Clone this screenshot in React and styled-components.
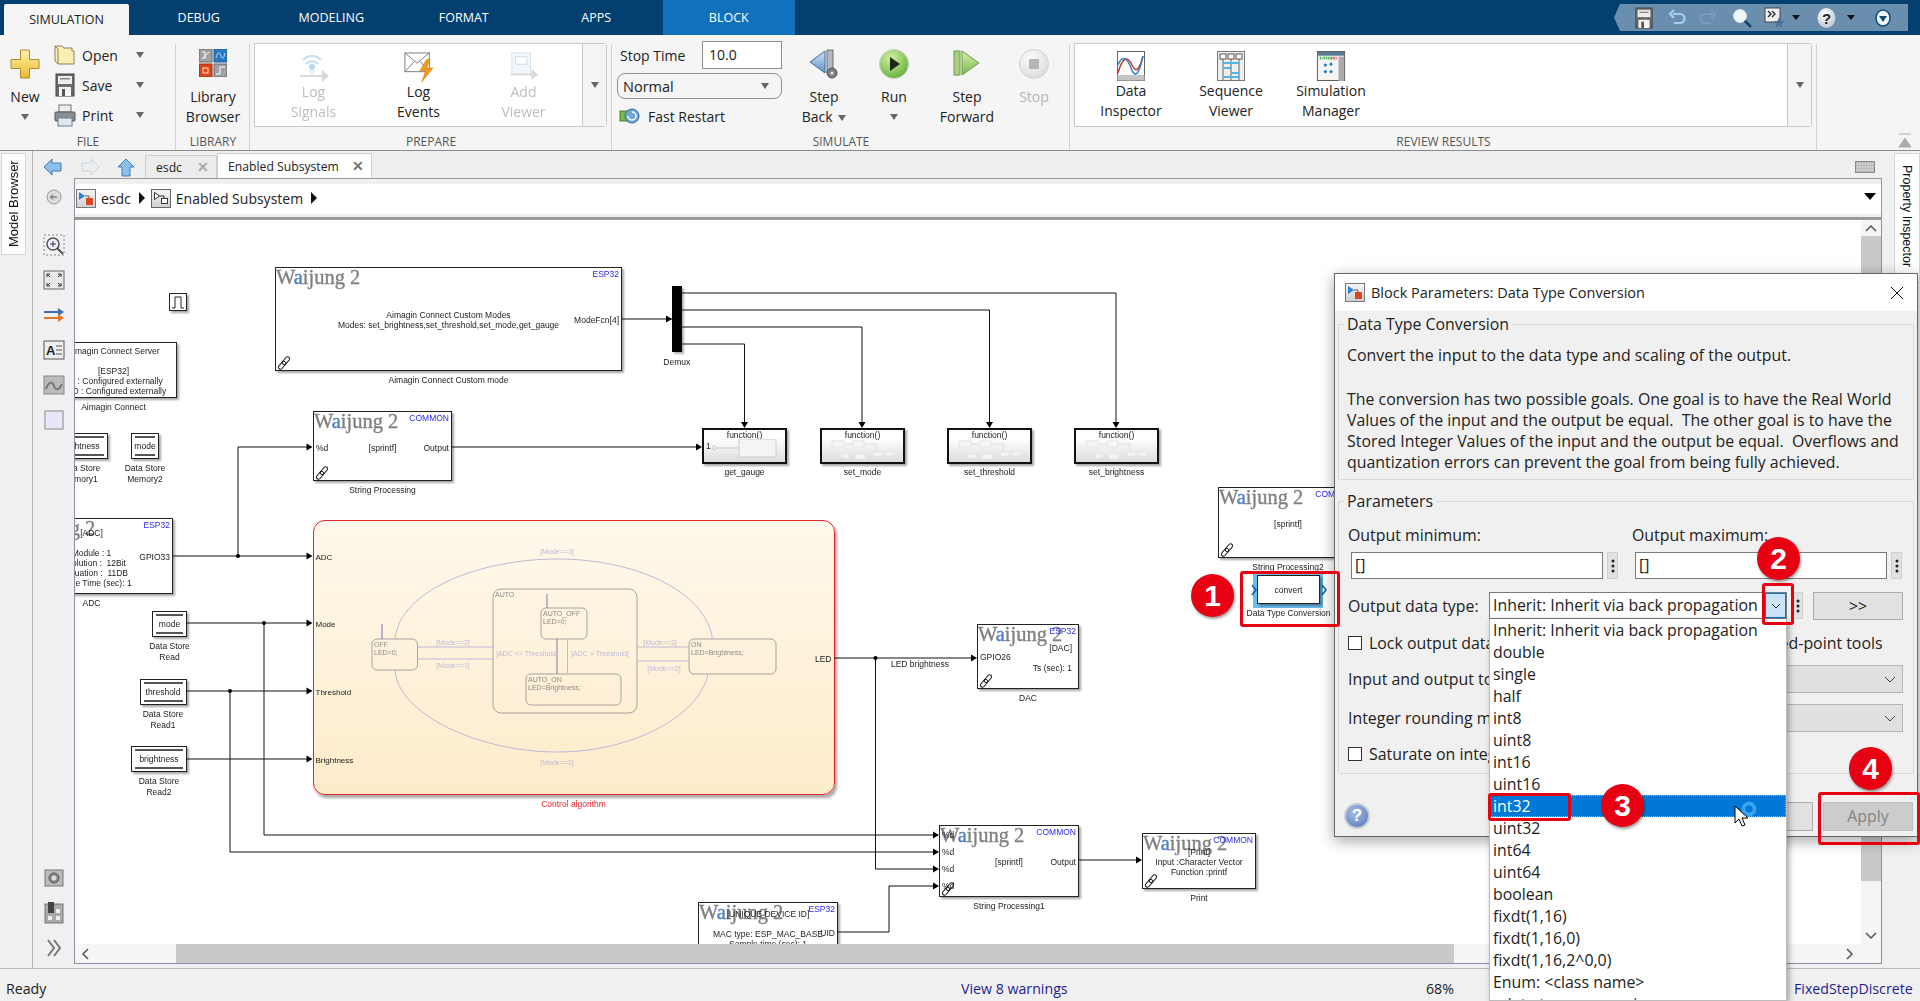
import React from "react";
import styled, { createGlobalStyle } from "styled-components";

const UI_FONT = `"Open Sans", "Noto Sans", sans-serif`;
const BLOCK_FONT = `"Liberation Sans", Arial, sans-serif`;

const TABS = ["SIMULATION", "DEBUG", "MODELING", "FORMAT", "APPS", "BLOCK"];
const DATA_TYPES = [
  "Inherit: Inherit via back propagation", "double", "single", "half", "int8", "uint8", "int16", "uint16", "int32",
  "uint32", "int64", "uint64", "boolean", "fixdt(1,16)", "fixdt(1,16,0)", "fixdt(1,16,2^0,0)", "Enum: <class name>",
  "<data type expression>",
];
const WIRES = [
  "M622 319H672", "M681 293H1116V423", "M681 310H989.5V423", "M681 327H862V423", "M681 344H744.5V423",
  "M452 447H697", "M173 556H307", "M238 556V447H307", "M186 623H307", "M264 623V835H934", "M186 691H307",
  "M230 691V852H934", "M186 759H307", "M834 658H972", "M875.5 658V869H934", "M838 932H889V886H934", "M1079 860H1137",
];
const RIGHT_ARROWS = [
  [672, 319], [702, 447], [312.5, 447], [312.5, 556], [312.5, 623], [312.5, 691], [312.5, 759], [977, 658],
  [939, 835], [939, 852], [939, 869], [939, 886], [1142, 860],
];
const DOWN_ARROWS = [744.5, 862, 989.5, 1116];
const JUNCTIONS = [[238, 556], [264, 623], [230, 691], [875.5, 658]];
const FUNCTIONS = [
  { x: 702, name: "get_gauge" }, { x: 820, name: "set_mode" },
  { x: 947, name: "set_threshold" }, { x: 1074, name: "set_brightness" },
];
const STATES = [
  { x: 372, y: 639, w: 45.5, h: 31, r: 5, lines: ["OFF", "LED=0;"] },
  { x: 493, y: 589, w: 144, h: 124, r: 8, lines: ["AUTO"] },
  { x: 541, y: 608, w: 46, h: 31, r: 5, lines: ["AUTO_OFF", "LED=0;"] },
  { x: 526, y: 674, w: 95, h: 31, r: 5, lines: ["AUTO_ON", "LED=Brightness;"] },
  { x: 689, y: 639, w: 87, h: 35, r: 5, lines: ["ON", "LED=Brightness;"] },
];
const GUARDS = [
  [557, 554, "[Mode==3]"], [453, 645, "[Mode==2]"], [453, 668, "[Mode==1]"], [527, 656, "[ADC <= Threshold]"],
  [600, 656, "[ADC > Threshold]"], [660, 645, "[Mode==3]"], [664, 671, "[Mode==2]"], [557, 765, "[Mode==1]"],
];

const Grad = ({ id, from, to, radial }) =>
  radial ? (
    <radialGradient id={id} cx="0.4" cy="0.3" r="0.8"><stop offset="0" stopColor={from} /><stop offset="1" stopColor={to} /></radialGradient>
  ) : (
    <linearGradient id={id} x1="0" y1="0" x2="0" y2="1"><stop offset="0" stopColor={from} /><stop offset="1" stopColor={to} /></linearGradient>
  );

const NewIcon = () => (
  <svg width="30" height="30" viewBox="0 0 30 30">
    <defs><Grad id="plus" from="#fff3a6" to="#eeb92e" /></defs>
    <path d="M10.5 1h9v9.500h9.500v9H19.500v9.500h-9V19.500H1v-9h9.500z" fill="url(#plus)" stroke="#a98a3a" />
  </svg>
);
const FolderIcon = () => (
  <svg width="22" height="24" viewBox="0 0 22 24">
    <path d="M1 3h7l2 2h8v3l2 0v13H4L1 18z" fill="#fbeeb4" stroke="#8d8258" />
    <path d="M1 3l3 3v15" fill="none" stroke="#8d8258" />
  </svg>
);
const SaveIcon = ({ size = 22 }) => (
  <svg width={size} height={size + 2} viewBox="0 0 22 24">
    <rect x="2" y="1" width="18" height="22" fill="#6b6b6b" stroke="#444" />
    <rect x="4" y="3" width="14" height="8" fill="#ececec" />
    <rect x="6" y="5" width="10" height="1.500" fill="#888" />
    <rect x="5" y="14" width="12" height="9" fill="#f4f4f4" />
    <rect x="8" y="16" width="3" height="7" fill="#555" />
  </svg>
);
const PrintIcon = () => (
  <svg width="22" height="24" viewBox="0 0 22 24">
    <rect x="5" y="2" width="12" height="7" fill="#eee" stroke="#777" />
    <rect x="1" y="9" width="20" height="9" rx="1" fill="#8b8f94" stroke="#555" />
    <rect x="4" y="15" width="14" height="8" fill="#dfe8f2" stroke="#6b7c90" />
  </svg>
);
const LibraryIcon = () => (
  <svg width="28" height="28" viewBox="0 0 28 28">
    <rect x="0" y="0" width="13" height="13" fill="#9fa3a8" stroke="#666" />
    <path d="M3 10l7-7M3 3h3v7" stroke="#fff" fill="none" />
    <rect x="15" y="0" width="13" height="13" fill="#2a79c2" stroke="#1b5a94" />
    <path d="M17 9c2-8 4-5 5-2s3 3 4-3" stroke="#bfe0ff" fill="none" />
    <rect x="0" y="15" width="13" height="13" fill="#d9481c" stroke="#9c2f10" />
    <rect x="4" y="19" width="5" height="5" fill="none" stroke="#ffe2d0" />
    <rect x="15" y="15" width="13" height="13" fill="#9fa3a8" stroke="#666" />
    <path d="M17 25h4v-7h5" stroke="#fff" fill="none" />
  </svg>
);
const LogSignalsIcon = () => (
  <svg width="32" height="30" viewBox="0 0 32 30">
    <path d="M5 8a12 12 0 0 1 18 0M8 12a8 8 0 0 1 12 0" fill="none" stroke="#8ec3ea" strokeWidth="2" />
    <circle cx="14" cy="15" r="3" fill="#7fb6e2" />
    <rect x="11" y="18" width="6" height="4" fill="#cfe3f3" />
    <path d="M2 24h24" stroke="#bbb" strokeWidth="2" />
    <path d="M24 18l7 6-7 6z" fill="#bbb" />
  </svg>
);
const LogEventsIcon = () => (
  <svg width="32" height="32" viewBox="0 0 32 32">
    <rect x="1" y="1" width="26" height="20" fill="#fff" stroke="#777" />
    <path d="M1 1l13 11L27 1M1 21l10-11M27 21L17 10" fill="none" stroke="#777" />
    <path d="M24 8l-7 12h6l-4 12 12-15h-7l4-9z" fill="#ef9a1b" stroke="#c46f0c" strokeWidth=".5" />
  </svg>
);
const AddViewerIcon = () => (
  <svg width="32" height="32" viewBox="0 0 32 32">
    <rect x="3" y="1" width="20" height="23" fill="#e8f1f9" stroke="#b8c8d6" />
    <rect x="7" y="5" width="12" height="8" fill="#fff" stroke="#9fc0de" />
    <path d="M2 24h24" stroke="#bbb" strokeWidth="2" />
    <path d="M24 18l7 6-7 6z" fill="#bbb" />
  </svg>
);
const StepBackIcon = () => (
  <svg width="30" height="30" viewBox="0 0 30 30">
    <defs><Grad id="sb" from="#cfe2f5" to="#5c93cc" /></defs>
    <path d="M16 2v22L1 13z" fill="url(#sb)" stroke="#3d6a9c" />
    <rect x="18" y="1" width="6" height="22" fill="#b5b9bd" stroke="#6d7176" />
    <circle cx="23" cy="24" r="5" fill="#7c8086" stroke="#4f5257" />
    <circle cx="23" cy="24" r="1.500" fill="#eee" />
  </svg>
);
const RunIcon = () => (
  <svg width="30" height="30" viewBox="0 0 30 30">
    <defs><Grad id="run" from="#d6f0a6" to="#58ad2e" radial /></defs>
    <circle cx="15" cy="15" r="14.500" fill="url(#run)" stroke="#c9cfc2" />
    <path d="M11 8l10 7-10 7z" fill="#1c2a14" />
  </svg>
);
const StepForwardIcon = () => (
  <svg width="30" height="30" viewBox="0 0 30 30">
    <defs><Grad id="sf" from="#d8efb2" to="#79b84a" /></defs>
    <rect x="2" y="2" width="6" height="24" fill="#a8cf82" stroke="#6f9c4a" />
    <path d="M10 2v24l17-12z" fill="url(#sf)" stroke="#6f9c4a" />
  </svg>
);
const StopIcon = () => (
  <svg width="30" height="30" viewBox="0 0 30 30">
    <defs><Grad id="stop" from="#fbfbfb" to="#d9d9d9" radial /></defs>
    <circle cx="15" cy="15" r="14.500" fill="url(#stop)" stroke="#d2d2d2" />
    <rect x="10" y="10" width="10" height="10" fill="#b5b5b5" />
  </svg>
);
const FastRestartIcon = () => (
  <svg width="22" height="20" viewBox="0 0 22 20">
    <rect x="1" y="5" width="10" height="10" fill="#79b84a" stroke="#4d7f2b" />
    <circle cx="13" cy="10" r="7" fill="#6fa9dc" stroke="#37689a" />
    <path d="M13 6a4 4 0 1 1-4 4" fill="none" stroke="#fff" strokeWidth="1.500" />
  </svg>
);
const DataInspectorIcon = () => (
  <svg width="30" height="30" viewBox="0 0 30 30">
    <rect x="1.500" y="0.500" width="27" height="29" fill="#fff" stroke="#666" />
    <rect x="1.500" y="24" width="27" height="5.500" fill="#c4c4c4" />
    <path d="M2 22C7 4 12 6 16 14s7 6 11-9" fill="none" stroke="#c0392b" strokeWidth="1.500" />
    <path d="M2 14C6 4 11 6 15 17s8 7 12-12" fill="none" stroke="#3a7fc5" strokeWidth="1.500" />
  </svg>
);
const SequenceIcon = () => (
  <svg width="30" height="30" viewBox="0 0 30 30">
    <rect x="1.500" y="0.500" width="27" height="29" fill="#eee" stroke="#777" />
    <rect x="4" y="3" width="6" height="5" fill="#fff" stroke="#555" />
    <rect x="12" y="3" width="6" height="5" fill="#fff" stroke="#555" />
    <rect x="20" y="3" width="6" height="5" fill="#fff" stroke="#555" />
    <path d="M7 8v21M15 8v21M23 8v21" stroke="#666" />
    <path d="M7 12h16M7 17h8M15 22h8M7 26h16" stroke="#55b3ec" strokeWidth="2" />
  </svg>
);
const SimManagerIcon = () => (
  <svg width="30" height="32" viewBox="0 0 30 32">
    <rect x="0.500" y="0.500" width="29" height="31" fill="#f4f4f4" stroke="#555" />
    <rect x="1" y="1" width="28" height="4" fill="#5b7a96" />
    <path d="M3 7.500h3" stroke="#3cb043" strokeWidth="3" strokeDasharray="1.500 1" />
    <path d="M7 7.500h8" stroke="#3cb043" strokeWidth="3" strokeDasharray="1.500 1" />
    <path d="M15 7.500h6" stroke="#e0463c" strokeWidth="3" strokeDasharray="1.500 1" />
    <rect x="23" y="6" width="6" height="26" fill="#aaa" />
    <path d="M9 13l2 2-2 2-2-2zM15 12l2 2-2 2-2-2zM9 20l2 2-2 2-2-2zM15 20l2 2-2 2-2-2z" fill="#1a78c2" />
  </svg>
);

const UndoIcon = ({ color }) => (
  <svg width="18" height="20" viewBox="0 0 18 20">
    <path d="M5 6h7a4.500 4.500 0 0 1 0 9H6M6 2L2 6l4 4" fill="none" stroke={color} strokeWidth="2.200" />
  </svg>
);
const RedoIcon = ({ color }) => (
  <svg width="18" height="20" viewBox="0 0 18 20">
    <path d="M13 6H6a4.500 4.500 0 0 0 0 9h6M12 2l4 4-4 4" fill="none" stroke={color} strokeWidth="2.200" />
  </svg>
);
const SearchIcon = () => (
  <svg width="20" height="20" viewBox="0 0 20 20">
    <path d="M12 12l7 7" stroke="#123f6a" strokeWidth="2.500" />
    <circle cx="8" cy="8" r="6.500" fill="#eef5fb" stroke="#d8e6f2" />
  </svg>
);
const BookmarkIcon = () => (
  <svg width="20" height="22" viewBox="0 0 20 22">
    <rect x="1" y="1" width="15" height="14" fill="#efefef" stroke="#444" />
    <path d="M4 4l3 3-3 3M8 4l3 3-3 3" fill="none" stroke="#222" strokeWidth="1.300" />
    <path d="M15 10l1.500 4 4 .2-3 2.600 1 4-3.500-2.200-3.500 2.200 1-4-3-2.600 4-.2z" fill="#4c7396" />
  </svg>
);
const HelpGlobe = () => (
  <svg width="19" height="22" viewBox="0 0 19 22">
    <defs><Grad id="hg" from="#ffffff" to="#b9c1c9" radial /></defs>
    <ellipse cx="9.500" cy="11" rx="9" ry="10" fill="url(#hg)" />
    <text x="9.500" y="16.500" fontFamily={BLOCK_FONT} fontSize="15" fontWeight="700" fill="#1e2a36" textAnchor="middle">?</text>
  </svg>
);
const MinimizeDot = () => (
  <svg width="16" height="18" viewBox="0 0 16 18">
    <ellipse cx="8" cy="9" rx="7" ry="8" fill="#f2f6fa" stroke="#0b4a7c" strokeWidth="1.500" />
    <path d="M4 7h8l-4 6z" fill="#0b4a7c" />
  </svg>
);
const ModelIcon = () => (
  <svg width="20" height="19" viewBox="0 0 20 19">
    <defs><Grad id="mi" from="#f6f6f6" to="#cfcfcf" /></defs>
    <rect x=".5" y=".5" width="19" height="18" fill="url(#mi)" stroke="#777" />
    <path d="M3 3l6 4-6 4z" fill="#2b86d2" />
    <rect x="10" y="9" width="7" height="7" fill="#d9481c" />
    <path d="M9 7h4v2" fill="none" stroke="#666" />
  </svg>
);
const SubsystemIcon = () => (
  <svg width="20" height="19" viewBox="0 0 20 19">
    <defs><Grad id="si" from="#f6f6f6" to="#cfcfcf" /></defs>
    <rect x=".5" y=".5" width="19" height="18" fill="url(#si)" stroke="#666" />
    <path d="M3.500 3.500l5 3.500-5 3.500z" fill="#fff" stroke="#333" />
    <rect x="10.500" y="9.500" width="6" height="5" fill="#fff" stroke="#333" />
    <path d="M8.500 7h4.500v2.500" fill="none" stroke="#333" />
  </svg>
);

const Arrow = ({ d, fill, stroke, size = 20 }) => (
  <svg width={size} height={size} viewBox="0 0 20 20"><path d={d} fill={fill} stroke={stroke} /></svg>
);
const ToolIcon = ({ children }) => <svg width="24" height="24" viewBox="0 0 24 24">{children}</svg>;
const ThreeDots = () => (
  <svg width="4" height="14" viewBox="0 0 4 14"><circle cx="2" cy="2" r="1.500" fill="#222" /><circle cx="2" cy="7" r="1.500" fill="#222" /><circle cx="2" cy="12" r="1.500" fill="#222" /></svg>
);

const WaijungLogo = () => <Logo>W<LogoA>a</LogoA>ijung 2</Logo>;
const LinkMark = () => (
  <LinkSvg width="14" height="14" viewBox="0 0 14 14">
    <g transform="rotate(-50 7 7)" fill="#fff" stroke="#222" strokeWidth="1">
      <rect x="-.5" y="5" width="9" height="4" rx="2" />
      <rect x="5.500" y="5" width="9" height="4" rx="2" fill="none" />
    </g>
  </LinkSvg>
);

const FunctionThumb = ({ first }) =>
  first ? (
    <ThumbSvg width="72" height="22" viewBox="0 0 72 22">
      <circle cx="6.500" cy="9" r="2" fill="none" stroke="#ccc" />
      <path d="M8.500 9H31" stroke="#ccc" />
      <rect x="31" y="0" width="37" height="18" fill="#f4f4f4" stroke="#ccc" />
    </ThumbSvg>
  ) : (
    <ThumbSvg width="72" height="22" viewBox="0 0 72 22">
      <g fill="#f5f5f5" stroke="#e6e6e6">
        <rect x="6" y="2" width="12" height="6" />
        <rect x="27" y="2" width="11" height="6" />
        <rect x="15" y="15" width="8" height="4" />
        <rect x="29" y="15" width="10" height="5" />
        <rect x="47" y="13" width="9" height="4" />
        <rect x="59" y="13" width="8" height="4" />
      </g>
      <path d="M18 5h9M38 5h12M50 5v8" stroke="#ddd" fill="none" />
    </ThumbSvg>
  );

const DataStore = ({ x, y, w, text, lines }) => (
  <StoreBlock $x={x} $y={y} $w={w} $h={26}>
    {text}
    <BlockLabel>{lines.map((l) => <div key={l}>{l}</div>)}</BlockLabel>
  </StoreBlock>
);

const Diagram = () => (
  <>
    <Block $x={275} $y={267} $w={347} $h={104}>
      <WaijungLogo /><Tag>ESP32</Tag>
      <BlockText $top={42}><div>Aimagin Connect Custom Modes</div><div>Modes: set_brightness,set_threshold,set_mode,get_gauge</div></BlockText>
      <PortOut $top={47}>ModeFcn[4]</PortOut>
      <LinkMark />
      <BlockLabel>Aimagin Connect Custom mode</BlockLabel>
    </Block>

    <PulseBlock $x={169} $y={293} $w={18} $h={18}>
      <svg width="14" height="14" viewBox="0 0 14 14"><path d="M1 13h3V2h6v11h3" fill="none" stroke="#222" /></svg>
    </PulseBlock>

    <Block $x={50} $y={342} $w={127} $h={56}>
      <BlockText $top={3}>
        <div>Aimagin Connect Server</div><div>&nbsp;</div><div>[ESP32]</div>
        <div>TX : Configured externally</div><div>RXD : Configured externally</div>
      </BlockText>
      <BlockLabel>Aimagin Connect</BlockLabel>
    </Block>

    <DataStore x={52} y={433} w={56} text="brightness" lines={["Data Store", "Memory1"]} />
    <DataStore x={131} y={433} w={28} text="mode" lines={["Data Store", "Memory2"]} />

    <Block $x={313} $y={411} $w={139} $h={70}>
      <WaijungLogo /><Tag>COMMON</Tag>
      <PortIn $top={31}>%d</PortIn>
      <BlockText $top={31}><div>[sprintf]</div></BlockText>
      <PortOut $top={31}>Output</PortOut>
      <LinkMark />
      <BlockLabel>String Processing</BlockLabel>
    </Block>

    <Block $x={10} $y={518} $w={163} $h={76}>
      <WaijungLogo /><Tag>ESP32</Tag>
      <BlockText $top={9}>
        <div>[ADC]</div><div>&nbsp;</div><div>Module : 1</div><div>Resolution :  12Bit</div>
        <div>Attenuation :  11DB</div><div>Sample Time (sec): 1</div>
      </BlockText>
      <PortOut $top={33}>GPIO33</PortOut>
      <BlockLabel>ADC</BlockLabel>
    </Block>

    <DataStore x={152} y={611} w={35} text="mode" lines={["Data Store", "Read"]} />
    <DataStore x={139.5} y={679} w={47} text="threshold" lines={["Data Store", "Read1"]} />
    <DataStore x={131} y={746} w={56} text="brightness" lines={["Data Store", "Read2"]} />

    <Demux $x={672} $y={286} $w={9.5} $h={66}><BlockLabel>Demux</BlockLabel></Demux>

    {FUNCTIONS.map((f, i) => (
      <FunctionBlock key={f.name} $x={f.x} $y={428} $w={85} $h={36}>
        <FunctionTitle>function()</FunctionTitle>
        {i === 0 && <PortIn $top={11}>1</PortIn>}
        <FunctionThumb first={i === 0} />
        <BlockLabel>{f.name}</BlockLabel>
      </FunctionBlock>
    ))}

    <Chart $x={312.5} $y={520} $w={522} $h={275}>
      <ChartPort $top={32}>ADC</ChartPort>
      <ChartPort $top={99}>Mode</ChartPort>
      <ChartPort $top={167}>Threshold</ChartPort>
      <ChartPort $top={235}>Brightness</ChartPort>
      <PortOut $top={133}>LED</PortOut>
      <ChartLabel>Control algorithm</ChartLabel>
    </Chart>

    <Block $x={1218} $y={487} $w={140} $h={71}>
      <WaijungLogo /><Tag>COMMON</Tag>
      <BlockText $top={31}><div>[sprintf]</div></BlockText>
      <LinkMark />
      <BlockLabel>String Processing2</BlockLabel>
    </Block>

    <Selection $x={1253} $y={572} $w={70} $h={36}>
      <Chevron $left={-2} width="6" height="12" viewBox="0 0 6 12"><path d="M1 1l4 5-4 5" fill="none" stroke="#0a5fa8" strokeWidth="1.500" /></Chevron>
      <Chevron $left={68} width="6" height="12" viewBox="0 0 6 12"><path d="M1 1l4 5-4 5" fill="none" stroke="#0a5fa8" strokeWidth="1.500" /></Chevron>
    </Selection>
    <Block $x={1257} $y={575} $w={63} $h={29}>
      <BlockText $top={9}><div>convert</div></BlockText>
      <BlockLabel>Data Type Conversion</BlockLabel>
    </Block>

    <Block $x={977} $y={624} $w={102} $h={65}>
      <WaijungLogo /><Tag>ESP32</Tag>
      <PortOut $top={18} $inset={6}>[DAC]</PortOut>
      <PortIn $top={27}>GPIO26</PortIn>
      <PortOut $top={38} $inset={6}>Ts (sec): 1</PortOut>
      <LinkMark />
      <BlockLabel>DAC</BlockLabel>
    </Block>

    <Block $x={939} $y={825} $w={140} $h={72}>
      <WaijungLogo /><Tag>COMMON</Tag>
      <PortIn $top={4}>%d</PortIn>
      <PortIn $top={21}>%d</PortIn>
      <PortIn $top={38}>%d</PortIn>
      <PortIn $top={55}>%d</PortIn>
      <BlockText $top={31}><div>[sprintf]</div></BlockText>
      <PortOut $top={31}>Output</PortOut>
      <LinkMark />
      <BlockLabel>String Processing1</BlockLabel>
    </Block>

    <Block $x={1142} $y={833} $w={114} $h={56}>
      <WaijungLogo /><Tag>COMMON</Tag>
      <BlockText $top={13}><div>[Print]</div><div>Input :Character Vector</div><div>Function :printf</div></BlockText>
      <LinkMark />
      <BlockLabel>Print</BlockLabel>
    </Block>

    <Block $x={698} $y={902} $w={140} $h={70}>
      <WaijungLogo /><Tag>ESP32</Tag>
      <BlockText $top={6}><div>[UNIQUE DEVICE ID]</div><div>&nbsp;</div><div>MAC type: ESP_MAC_BASE</div><div>Sample time (sec): 1</div></BlockText>
      <PortOut $top={25}>UID</PortOut>
    </Block>

    <WireLayer width="1787" height="724" viewBox="75 220 1787 724">
      <g fill="none" stroke="#111" strokeWidth="1">
        {WIRES.map((d) => <path key={d} d={d} />)}
      </g>
      <g fill="#000">
        {RIGHT_ARROWS.map(([x, y]) => <path key={`${x}-${y}`} d={`M${x} ${y}l-6-3.500v7z`} />)}
        {DOWN_ARROWS.map((x) => <path key={x} d={`M${x} 428l-3.500-6h7z`} />)}
        {JUNCTIONS.map(([x, y]) => <circle key={x} cx={x} cy={y} r="2" />)}
      </g>
      <text x="920" y="667" fontFamily={BLOCK_FONT} fontSize="8.500" textAnchor="middle" fill="#222">LED brightness</text>
      <g fill="none" stroke="#a9a2a0">
        {STATES.map((s) => <rect key={s.lines[0]} x={s.x} y={s.y} width={s.w} height={s.h} rx={s.r} />)}
      </g>
      <g fontFamily={BLOCK_FONT} fontSize="7" fill="#8f8a86">
        {STATES.map((s) => s.lines.map((l, i) => <text key={l + s.x} x={s.x + 2} y={s.y + 8 + i * 8}>{l}</text>))}
      </g>
      <g fill="none" stroke="#bdb9d8">
        <path d="M395 639C400 590 480 559 557 559S705 590 712.500 639" />
        <path d="M395 670C398 715 480 752 557 752S700 715 708 674" />
        <path d="M417.500 647H493M417.500 659H493M637 647H689M637 661H689M567.500 639V674" />
        <path d="M382 624V639M547 594V608M557 639V674" stroke="#7c78b4" />
      </g>
      <g fontFamily={BLOCK_FONT} fontSize="7" fill="#bdb9d8" textAnchor="middle">
        {GUARDS.map(([x, y, t]) => <text key={`${t}${x}${y}`} x={x} y={y}>{t}</text>)}
      </g>
    </WireLayer>
  </>
);

const Dialog = () => (
  <DialogWindow>
    <DialogTitleBar>
      <ModelIcon />
      <DialogTitle>Block Parameters: Data Type Conversion</DialogTitle>
      <CloseX width="16" height="16" viewBox="0 0 16 16"><path d="M2 2l12 12M14 2L2 14" stroke="#111" /></CloseX>
    </DialogTitleBar>
    <DialogBody>
      <Group>
        <GroupLegend>Data Type Conversion</GroupLegend>
        <Para $gap={23}>Convert the input to the data type and scaling of the output.</Para>
        <Para>The conversion has two possible goals. One goal is to have the Real World</Para>
        <Para>Values of the input and the output be equal.&nbsp; The other goal is to have the</Para>
        <Para>Stored Integer Values of the input and the output be equal.&nbsp; Overflows and</Para>
        <Para>quantization errors can prevent the goal from being fully achieved.</Para>
      </Group>
      <ParamGroup>
        <GroupLegend>Parameters</GroupLegend>
        <MinMaxGrid>
          <FieldLabel>Output minimum:</FieldLabel>
          <FieldLabel>Output maximum:</FieldLabel>
          <FieldWrap><TextField>[]</TextField><DotsButton><ThreeDots /></DotsButton></FieldWrap>
          <FieldWrap><TextField>[]</TextField><DotsButton><ThreeDots /></DotsButton></FieldWrap>
        </MinMaxGrid>
        <TypeRow>
          <TypeLabel>Output data type:</TypeLabel>
          <TypeSelect>
            <TypeValue>Inherit: Inherit via back propagation</TypeValue>
            <TypeCaret>
              <svg width="10" height="6" viewBox="0 0 10 6"><path d="M1 1l4 4 4-4" fill="none" stroke="#333" /></svg>
            </TypeCaret>
          </TypeSelect>
          <DotsButton><ThreeDots /></DotsButton>
          <ExpandButton>&gt;&gt;</ExpandButton>
        </TypeRow>
        <CheckRow $mt={13}><CheckBox />Lock output data type setting against changes by the fixed-point tools</CheckRow>
        <SelectRow $mt={11}>
          Input and output to have equal:
          <DisabledSelect><svg width="12" height="7" viewBox="0 0 12 7"><path d="M1 1l5 5 5-5" fill="none" stroke="#444" /></svg></DisabledSelect>
        </SelectRow>
        <SelectRow $mt={11}>
          Integer rounding mode:
          <DisabledSelect><svg width="12" height="7" viewBox="0 0 12 7"><path d="M1 1l5 5 5-5" fill="none" stroke="#444" /></svg></DisabledSelect>
        </SelectRow>
        <CheckRow $mt={11}><CheckBox />Saturate on integer overflow</CheckRow>
      </ParamGroup>
      <DialogFooter>
        <HelpBadge>?</HelpBadge>
        <FooterButtons>
          <PlainButton>OK</PlainButton>
          <PlainButton>Cancel</PlainButton>
          <PlainButton>Help</PlainButton>
          <ApplyButton>Apply</ApplyButton>
        </FooterButtons>
      </DialogFooter>
    </DialogBody>
  </DialogWindow>
);

const App = () => (
  <Page>
    <GlobalStyle />
    <TabBar>
      {TABS.map((t, i) => <Tab key={t} $active={i === 0} $context={t === "BLOCK"}>{t}</Tab>)}
      <QuickAccess>
        <QuickSlot $ml={0}><SaveIcon size={20} /></QuickSlot>
        <QuickSlot $ml={14}><UndoIcon color="#a6cfef" /></QuickSlot>
        <QuickSlot $ml={13}><RedoIcon color="#7b9cb8" /></QuickSlot>
        <QuickSlot $ml={15}><SearchIcon /></QuickSlot>
        <QuickSlot $ml={12}><BookmarkIcon /></QuickSlot>
        <QuickSlot $ml={8}><SmallCaret /></QuickSlot>
        <QuickSlot $ml={17}><HelpGlobe /></QuickSlot>
        <QuickSlot $ml={11}><SmallCaret /></QuickSlot>
        <QuickSlot $ml={20}><MinimizeDot /></QuickSlot>
      </QuickAccess>
    </TabBar>

    <Ribbon>
      <Section $w={176} label="FILE">
        <FileBody>
          <BigButton $w={50}><IconSlot><NewIcon /></IconSlot><ButtonText>New</ButtonText><BelowCaret /></BigButton>
          <FileList>
            <FileRow><FolderIcon /><span>Open</span><Caret /></FileRow>
            <FileRow><SaveIcon /><span>Save</span><Caret /></FileRow>
            <FileRow><PrintIcon /><span>Print</span><Caret /></FileRow>
          </FileList>
        </FileBody>
      </Section>
      <Section $w={74} label="LIBRARY">
        <BigButton $w={74}><IconSlot><LibraryIcon /></IconSlot><ButtonText>Library</ButtonText><ButtonText>Browser</ButtonText></BigButton>
      </Section>
      <Section $w={362} label="PREPARE">
        <Gallery $w={353}>
          <GalleryItems $step={105}>
            <GalleryItem $off><LogSignalsIcon /><ButtonText>Log</ButtonText><ButtonText>Signals</ButtonText></GalleryItem>
            <GalleryItem><LogEventsIcon /><ButtonText>Log</ButtonText><ButtonText>Events</ButtonText></GalleryItem>
            <GalleryItem $off><AddViewerIcon /><ButtonText>Add</ButtonText><ButtonText>Viewer</ButtonText></GalleryItem>
          </GalleryItems>
          <GalleryStrip><Caret /></GalleryStrip>
        </Gallery>
      </Section>
      <Section $w={458} label="SIMULATE">
        <SimulateBody>
          <SimulateForm>
            <StopRow>Stop Time<StopInput>10.0</StopInput></StopRow>
            <ModeSelect>Normal<Caret /></ModeSelect>
            <RestartRow><FastRestartIcon />Fast Restart</RestartRow>
          </SimulateForm>
          <BigButton $w={72}><IconSlot><StepBackIcon /></IconSlot><ButtonText>Step</ButtonText><ButtonText>Back <InlineCaret /></ButtonText></BigButton>
          <BigButton $w={68}><IconSlot><RunIcon /></IconSlot><ButtonText>Run</ButtonText><BelowCaret /></BigButton>
          <BigButton $w={78}><IconSlot><StepForwardIcon /></IconSlot><ButtonText>Step</ButtonText><ButtonText>Forward</ButtonText></BigButton>
          <BigButton $w={56}><IconSlot><StopIcon /></IconSlot><ButtonText $off>Stop</ButtonText></BigButton>
        </SimulateBody>
      </Section>
      <Section $w={747} label="REVIEW RESULTS">
        <Gallery $w={738}>
          <GalleryItems $step={100}>
            <GalleryItem $dy={-1}><DataInspectorIcon /><ButtonText>Data</ButtonText><ButtonText>Inspector</ButtonText></GalleryItem>
            <GalleryItem $dy={-1}><SequenceIcon /><ButtonText>Sequence</ButtonText><ButtonText>Viewer</ButtonText></GalleryItem>
            <GalleryItem $dy={-1}><SimManagerIcon /><ButtonText>Simulation</ButtonText><ButtonText>Manager</ButtonText></GalleryItem>
          </GalleryItems>
          <GalleryStrip><Caret /></GalleryStrip>
        </Gallery>
      </Section>
      <RibbonEnd>
        <svg width="14" height="15" viewBox="0 0 14 15"><path d="M1 1h12M7 5l6 9H1z" stroke="#a9adb2" fill="#a9adb2" /></svg>
      </RibbonEnd>
    </Ribbon>

    <Workspace>
      <SideRail>
        <ModelBrowserTab>Model Browser</ModelBrowserTab>
      </SideRail>
      <Center>
        <NavRow>
          <Arrow d="M9 2L1 10l8 8v-4h9V6H9z" fill="#8cc0ea" stroke="#3f7db5" />
          <NavGap><Arrow d="M11 2l8 8-8 8v-4H2V6h9z" fill="#eceff2" stroke="#cdd2d6" /></NavGap>
          <NavGap $w={16}><Arrow d="M2 10l8-8 8 8h-4v9H6v-9z" fill="#8cc0ea" stroke="#3f7db5" /></NavGap>
          <DocTab>esdc<TabClose>✕</TabClose></DocTab>
          <DocTab $active>Enabled Subsystem<TabClose $active>✕</TabClose></DocTab>
          <KeyboardIcon width="20" height="12" viewBox="0 0 20 12">
            <rect x=".5" y=".5" width="19" height="11" fill="#bbb" stroke="#8a8a8a" />
            <path d="M2 3h16M2 6h16M2 9h16" stroke="#eee" strokeDasharray="1.500 1" />
          </KeyboardIcon>
        </NavRow>
        <ContentRow>
          <ToolColumn>
            <ToolTop>
              <ToolIcon><circle cx="12" cy="12" r="7" fill="#ddd" stroke="#999" /><path d="M15 12H9M11 9.500l-2.500 2.500 2.500 2.500" fill="none" stroke="#555" /></ToolIcon>
              <ToolIcon><rect x="2" y="2" width="20" height="20" fill="none" stroke="#888" strokeDasharray="2 2" /><circle cx="11" cy="11" r="6" fill="#eef" stroke="#555" strokeWidth="1.500" /><path d="M15 15l6 6" stroke="#555" strokeWidth="2" /><path d="M8 11h6M11 8v6" stroke="#333" /></ToolIcon>
              <ToolIcon><rect x="2" y="3" width="20" height="18" fill="#e8e8e8" stroke="#666" /><path d="M5 6l3 3M5 6h3M5 6v3M19 6l-3 3M19 6h-3M19 6v3M5 18l3-3M5 18h3M5 18v-3M19 18l-3-3M19 18h-3M19 18v-3" stroke="#333" fill="none" /></ToolIcon>
              <ToolIcon><path d="M2 9h16M2 15h16" stroke="#3f6fa8" strokeWidth="2" /><path d="M2 15h16" stroke="#e2762b" strokeWidth="2" /><path d="M16 5l6 4-6 4z" fill="#3f6fa8" /><path d="M16 11l6 4-6 4z" fill="#e2762b" /></ToolIcon>
              <ToolIcon><rect x="2" y="3" width="20" height="18" fill="#eee" stroke="#555" /><text x="4" y="17" fontFamily={BLOCK_FONT} fontSize="13" fontWeight="700" fill="#222">A</text><path d="M14 8h6M14 12h6M14 16h6" stroke="#555" /></ToolIcon>
              <ToolIcon><rect x="2" y="3" width="20" height="18" fill="#bbb" stroke="#888" /><path d="M4 16c3-8 6-8 8-3s5 4 8-2" fill="none" stroke="#777" strokeWidth="2" /></ToolIcon>
              <ToolIcon><rect x="3" y="3" width="18" height="18" fill="#e6e6f8" stroke="#aaa" strokeWidth="1.500" /></ToolIcon>
            </ToolTop>
            <ToolBottom>
              <ToolIcon><rect x="3" y="5" width="18" height="16" fill="#bbb" stroke="#777" /><circle cx="12" cy="13" r="5" fill="#888" stroke="#555" /><circle cx="12" cy="13" r="2.500" fill="#ddd" /></ToolIcon>
              <ToolIcon><rect x="3" y="3" width="18" height="19" fill="#aaa" stroke="#777" /><rect x="6" y="1" width="6" height="11" fill="#444" /><path d="M6 15h4v4H6zM14 15h4v4h-4zM14 8h4v4h-4z" fill="#eee" /></ToolIcon>
              <ToolIcon><path d="M6 4l6 8-6 8M12 4l6 8-6 8" fill="none" stroke="#777" strokeWidth="2" /></ToolIcon>
            </ToolBottom>
          </ToolColumn>
          <MainColumn>
            <AddressBar>
              <Crumb><ModelIcon />esdc<CrumbArrow /></Crumb>
              <Crumb><SubsystemIcon />Enabled Subsystem<CrumbArrow /></Crumb>
              <AddressCaret />
            </AddressBar>
            <CanvasFrame>
              <CanvasRow>
                <DiagramArea><Diagram /></DiagramArea>
                <VScroll>
                  <ScrollGlyph width="12" height="8" viewBox="0 0 12 8"><path d="M1 7l5-5 5 5" fill="none" stroke="#555" strokeWidth="1.500" /></ScrollGlyph>
                  <VThumb />
                  <ScrollGlyph width="12" height="8" viewBox="0 0 12 8"><path d="M1 1l5 5 5-5" fill="none" stroke="#555" strokeWidth="1.500" /></ScrollGlyph>
                </VScroll>
              </CanvasRow>
              <HScroll>
                <ScrollGlyph width="8" height="12" viewBox="0 0 8 12"><path d="M7 1L2 6l5 5" fill="none" stroke="#555" strokeWidth="1.500" /></ScrollGlyph>
                <HThumb />
                <ScrollGlyph width="8" height="12" viewBox="0 0 8 12"><path d="M1 1l5 5-5 5" fill="none" stroke="#555" strokeWidth="1.500" /></ScrollGlyph>
              </HScroll>
            </CanvasFrame>
          </MainColumn>
        </ContentRow>
      </Center>
      <RightRail><InspectorTab>Property Inspector</InspectorTab></RightRail>
    </Workspace>

    <StatusBar>
      <span>Ready</span>
      <StatusLink $left={961}>View 8 warnings</StatusLink>
      <StatusPlain $left={1426}>68%</StatusPlain>
      <StatusLink $left={1794}>FixedStepDiscrete</StatusLink>
    </StatusBar>

    <Dialog />

    <DropdownList>
      {DATA_TYPES.map((t) => <DropdownItem key={t} $selected={t === "int32"}>{t}</DropdownItem>)}
    </DropdownList>

    <RedBox $x={1240} $y={571} $w={100} $h={56} />
    <RedBox $x={1762} $y={583} $w={32} $h={42} />
    <RedBox $x={1488} $y={793} $w={83} $h={28} />
    <RedBox $x={1818} $y={792} $w={102} $h={53} />
    <StepBadge $x={1191} $y={574}>1</StepBadge>
    <StepBadge $x={1757} $y={537}>2</StepBadge>
    <StepBadge $x={1601} $y={784}>3</StepBadge>
    <StepBadge $x={1849} $y={747}>4</StepBadge>

    <BusyCursor width="28" height="28" viewBox="0 0 28 28">
      <circle cx="18" cy="8" r="5.500" fill="none" stroke="#36a3ee" strokeWidth="4" />
      <path d="M4 5v17l4-4 3 7 3-1-3-7h6z" fill="#fff" stroke="#000" />
    </BusyCursor>
  </Page>
);

export default App;

const GlobalStyle = createGlobalStyle`
  html, body {
    margin: 0;
    padding: 0;
    background: #f0f0f0;
  }
  * {
    box-sizing: border-box;
  }
`;

const Page = styled.div`
  position: relative;
  width: 1920px;
  height: 1001px;
  overflow: hidden;
  display: flex;
  flex-direction: column;
  font-family: ${UI_FONT};
  color: #222;
`;

const TabBar = styled.div`
  height: 35px;
  flex: none;
  display: flex;
  background: #03406f;
`;

const Tab = styled.div`
  width: ${(p) => (p.$active ? "125px" : "132.500px")};
  margin-top: ${(p) => (p.$active ? "4px" : "0")};
  margin-left: ${(p) => (p.$active ? "4px" : "0")};
  margin-right: ${(p) => (p.$active ? "3.500px" : "0")};
  border-radius: ${(p) => (p.$active ? "2px 2px 0 0" : "0")};
  display: flex;
  align-items: center;
  justify-content: center;
  font-size: 12.500px;
  color: ${(p) => (p.$active ? "#222" : "#fff")};
  background: ${(p) => (p.$active ? "#f5f5f5" : p.$context ? "#1271bd" : "transparent")};
`;

const QuickAccess = styled.div`
  position: absolute;
  left: 1614px;
  top: 4px;
  width: 294px;
  height: 27px;
  padding-left: 20px;
  display: flex;
  align-items: center;
  background: #6a8fae;
  clip-path: polygon(6px 0, 100% 0, 100% 100%, 6px 100%, 0 50%);
`;

const QuickSlot = styled.div`
  margin-left: ${(p) => p.$ml}px;
  flex: none;
  display: flex;
  align-items: center;
`;

const SmallCaret = styled.span`
  width: 0;
  height: 0;
  border-left: 4px solid transparent;
  border-right: 4px solid transparent;
  border-top: 5px solid #111;
`;

const Ribbon = styled.div`
  height: 116px;
  flex: none;
  display: flex;
  background: #f5f5f5;
  border-bottom: 1px solid #8a8a8a;
`;

const SectionBox = styled.div`
  width: ${(p) => p.$w}px;
  flex: none;
  display: flex;
  flex-direction: column;
  position: relative;
  &::after {
    content: "";
    position: absolute;
    right: 0;
    top: 9px;
    bottom: 0;
    width: 1px;
    background: #d2d2d2;
  }
`;

const SectionBody = styled.div`
  height: 98px;
  flex: none;
  display: flex;
  justify-content: flex-start;
`;

const SectionLabel = styled.div`
  height: 17px;
  font-size: 12px;
  line-height: 17px;
  text-align: center;
  color: #555;
`;

const Section = ({ $w, label, children }) => (
  <SectionBox $w={$w}>
    <SectionBody>{children}</SectionBody>
    <SectionLabel>{label}</SectionLabel>
  </SectionBox>
);

const RibbonEnd = styled.div`
  flex: 1;
  display: flex;
  justify-content: flex-end;
  align-items: flex-end;
  padding: 0 8px 2px 0;
`;

const BigButton = styled.div`
  width: ${(p) => p.$w}px;
  flex: none;
  padding-top: 14px;
  display: flex;
  flex-direction: column;
  align-items: center;
`;

const IconSlot = styled.div`
  height: 30px;
  margin-bottom: 8px;
  display: flex;
  justify-content: center;
`;

const ButtonText = styled.div`
  font-size: 14px;
  line-height: 20px;
  white-space: nowrap;
  color: ${(p) => (p.$off ? "#b5b5b5" : "#222")};
`;

const Caret = styled.span`
  display: inline-block;
  width: 0;
  height: 0;
  border-left: 4.500px solid transparent;
  border-right: 4.500px solid transparent;
  border-top: 6px solid #666;
`;

const BelowCaret = styled(Caret)`
  margin-top: 7px;
`;

const InlineCaret = styled(Caret)`
  margin-left: 2px;
  vertical-align: 1px;
`;

const FileBody = styled.div`
  display: flex;
  flex: 1;
`;

const FileList = styled.div`
  padding-top: 5px;
  margin-left: 4px;
  display: flex;
  flex-direction: column;
`;

const FileRow = styled.div`
  height: 30px;
  width: 92px;
  display: flex;
  align-items: center;
  gap: 6px;
  font-size: 14px;
  span:first-of-type {
    width: 48px;
  }
`;

const Gallery = styled.div`
  width: ${(p) => p.$w}px;
  height: 84px;
  margin: 8px 0 0 4px;
  display: flex;
  background: #fff;
  border: 1px solid #c8c8c8;
  border-radius: 0 3px 3px 0;
`;

const GalleryItems = styled.div`
  flex: 1;
  display: grid;
  grid-template-columns: repeat(3, ${(p) => p.$step}px);
  padding-left: 6px;
`;

const GalleryItem = styled.div`
  padding-top: ${(p) => 8 + (p.$dy || 0)}px;
  display: flex;
  flex-direction: column;
  align-items: center;
  opacity: ${(p) => (p.$off ? 0.55 : 1)};
  svg {
    height: 30px;
    margin-bottom: 0;
  }
  ${ButtonText} {
    color: ${(p) => (p.$off ? "#888" : "#222")};
  }
`;

const GalleryStrip = styled.div`
  width: 24px;
  flex: none;
  display: flex;
  align-items: center;
  justify-content: center;
  background: #f5f5f5;
  border-left: 1px solid #c8c8c8;
`;

const SimulateBody = styled.div`
  display: flex;
  flex: 1;
`;

const SimulateForm = styled.div`
  width: 176px;
  padding: 6px 6px 0 5px;
  flex: none;
  font-size: 14px;
`;

const StopRow = styled.div`
  height: 28px;
  padding-left: 3px;
  display: flex;
  align-items: center;
  justify-content: space-between;
`;

const StopInput = styled.div`
  width: 80px;
  height: 28px;
  padding-left: 6px;
  line-height: 26px;
  background: #fff;
  border: 1px solid #8f8f8f;
`;

const ModeSelect = styled.div`
  height: 26px;
  margin-top: 4px;
  padding: 0 12px 0 5px;
  display: flex;
  align-items: center;
  justify-content: space-between;
  border: 1px solid #8f8f8f;
  border-radius: 8px;
  font-size: 14.500px;
`;

const RestartRow = styled.div`
  height: 34px;
  padding-left: 2px;
  display: flex;
  align-items: center;
  gap: 7px;
`;

const Workspace = styled.div`
  flex: 1;
  display: flex;
  min-height: 0;
`;

const SideRail = styled.div`
  width: 33px;
  flex: none;
  padding: 2px 0 0 1px;
  background: #f0f0f0;
  border-right: 1px solid #b4b4b4;
`;

const ModelBrowserTab = styled.div`
  width: 25px;
  height: 102px;
  display: flex;
  align-items: center;
  justify-content: center;
  writing-mode: vertical-rl;
  transform: rotate(180deg);
  background: #fff;
  border: 1px solid #d5d5d5;
  font: 13px ${BLOCK_FONT};
  color: #111;
`;

const Center = styled.div`
  flex: 1;
  min-width: 0;
  display: flex;
  flex-direction: column;
`;

const NavRow = styled.div`
  height: 27px;
  flex: none;
  padding: 4px 8px 0 10px;
  display: flex;
  align-items: center;
  background: #efefef;
`;

const NavGap = styled.div`
  margin-left: ${(p) => p.$w || 17}px;
  display: flex;
`;

const DocTab = styled.div`
  height: ${(p) => (p.$active ? "25px" : "23px")};
  width: ${(p) => (p.$active ? "155px" : "72px")};
  margin-left: ${(p) => (p.$active ? "0" : "9px")};
  align-self: flex-end;
  padding: 0 7px 0 10px;
  display: flex;
  align-items: center;
  justify-content: space-between;
  font-size: 12.200px;
  background: ${(p) => (p.$active ? "#fff" : "#ececec")};
  border: 1px solid #cfcfcf;
  border-bottom: none;
`;

const TabClose = styled.span`
  font: 700 14px ${BLOCK_FONT};
  color: ${(p) => (p.$active ? "#777" : "#aaa")};
`;

const KeyboardIcon = styled.svg`
  margin-left: auto;
`;

const ContentRow = styled.div`
  flex: 1;
  min-height: 0;
  display: flex;
`;

const ToolColumn = styled.div`
  width: 41px;
  flex: none;
  padding-bottom: 8px;
  display: flex;
  flex-direction: column;
  justify-content: space-between;
  background: #f0f0f0;
`;

const ToolTop = styled.div`
  padding-top: 7px;
  display: flex;
  flex-direction: column;
  align-items: center;
  gap: 11px;
  svg:first-child {
    margin-bottom: 13px;
  }
`;

const ToolBottom = styled.div`
  display: flex;
  flex-direction: column;
  align-items: center;
  gap: 11.500px;
`;

const MainColumn = styled.div`
  flex: 1;
  min-width: 0;
  display: flex;
  flex-direction: column;
`;

const AddressBar = styled.div`
  height: 39px;
  flex: none;
  margin-right: 1px;
  padding: 0 0 0 1px;
  position: relative;
  display: flex;
  align-items: center;
  background: linear-gradient(#f0f0f0 5px, #fff 5px, #fff 35px, #f0f0f0 35px);
  border-top: 1px solid #999;
  border-left: 1px solid #8a93a3;
  border-right: 1px solid #8a93a3;
  font-size: 14px;
`;

const Crumb = styled.div`
  display: flex;
  align-items: center;
  gap: 5px;
  margin-right: 6px;
`;

const CrumbArrow = styled.span`
  width: 0;
  height: 0;
  margin-left: 3px;
  border-top: 6px solid transparent;
  border-bottom: 6px solid transparent;
  border-left: 6px solid #111;
`;

const AddressCaret = styled.span`
  position: absolute;
  right: 5px;
  top: 14px;
  width: 0;
  height: 0;
  border-left: 6px solid transparent;
  border-right: 6px solid transparent;
  border-top: 7px solid #000;
`;

const CanvasFrame = styled.div`
  flex: 1;
  min-height: 0;
  margin-bottom: 4px;
  margin-right: 1px;
  display: flex;
  flex-direction: column;
  background: #fff;
  border: 1px solid #8a93a3;
  border-top: 3px solid #9a9a9a;
`;

const CanvasRow = styled.div`
  flex: 1;
  min-height: 0;
  display: flex;
`;

const DiagramArea = styled.div`
  flex: 1;
  min-width: 0;
  position: relative;
  overflow: hidden;
  background: #fff;
  font: 8.500px/10px ${BLOCK_FONT};
  color: #222;
  filter: blur(0.35px);
`;

const VScroll = styled.div`
  width: 20px;
  flex: none;
  padding: 4px 0;
  display: flex;
  flex-direction: column;
  align-items: center;
  background: #f5f5f5;
`;

const VThumb = styled.div`
  width: 20px;
  flex: 1;
  margin: 4px 0 51px;
  background: #c9c9c9;
`;

const HScroll = styled.div`
  height: 19px;
  flex: none;
  padding-left: 6px;
  padding-right: 27px;
  display: flex;
  align-items: center;
  background: #f5f5f5;
`;

const HThumb = styled.div`
  height: 19px;
  width: 1278px;
  margin: 0 auto 0 87px;
  background: #c9c9c9;
`;

const ScrollGlyph = styled.svg`
  flex: none;
`;

const RightRail = styled.div`
  width: 37px;
  flex: none;
  padding: 2px 0 0 11px;
  background: #f0f0f0;
`;

const InspectorTab = styled.div`
  width: 26px;
  height: 130px;
  padding-top: 11px;
  display: flex;
  align-items: center;
  writing-mode: vertical-rl;
  background: #fff;
  border: 1px solid #d5d5d5;
  font: 12.500px ${BLOCK_FONT};
  color: #111;
`;

const StatusBar = styled.div`
  height: 33px;
  flex: none;
  position: relative;
  padding: 7px 0 0 6px;
  display: flex;
  align-items: center;
  background: #f0f0f0;
  border-top: 1px solid #bbb;
  font-size: 14.200px;
  color: #222;
`;

const StatusPlain = styled.span`
  position: absolute;
  left: ${(p) => p.$left}px;
`;

const StatusLink = styled(StatusPlain)`
  color: #1c1c92;
`;

const Node = styled.div`
  position: absolute;
  left: ${(p) => p.$x - 75}px;
  top: ${(p) => p.$y - 220}px;
  width: ${(p) => p.$w}px;
  height: ${(p) => p.$h}px;
`;

const Block = styled(Node)`
  background: #fff;
  border: 1px solid #222;
  box-shadow: 2px 2px 2px rgba(0, 0, 0, 0.35);
`;

const PulseBlock = styled(Block)`
  display: flex;
  align-items: center;
  justify-content: center;
`;

const StoreBlock = styled(Block)`
  display: flex;
  align-items: center;
  justify-content: center;
  &::before,
  &::after {
    content: "";
    position: absolute;
    left: 3px;
    right: 3px;
    height: 2px;
    background: #555;
  }
  &::before {
    top: 2px;
  }
  &::after {
    bottom: 2px;
  }
`;

const Demux = styled(Node)`
  background: #000;
  box-shadow: 2px 2px 2px rgba(0, 0, 0, 0.3);
`;

const FunctionBlock = styled(Block)`
  border: 2px solid #111;
  background: linear-gradient(#fff 25%, #dcdcdc);
`;

const FunctionTitle = styled.div`
  text-align: center;
`;

const ThumbSvg = styled.svg`
  position: absolute;
  left: 4px;
  top: 9px;
`;

const BlockLabel = styled.div`
  position: absolute;
  left: 50%;
  top: 100%;
  margin-top: 4.500px;
  line-height: 11px;
  transform: translateX(-50%);
  white-space: nowrap;
  text-align: center;
  color: #222;
`;

const Logo = styled.div`
  position: absolute;
  left: 0;
  top: -3px;
  font: 20.500px/24px "Liberation Serif", serif;
  -webkit-text-stroke: 0.35px currentColor;
  color: #808080;
  white-space: nowrap;
`;

const LogoA = styled.span`
  color: #4f7fc4;
`;

const Tag = styled.div`
  position: absolute;
  right: 2px;
  top: 1px;
  color: #2a2af0;
`;

const LinkSvg = styled.svg`
  position: absolute;
  left: 1px;
  bottom: 0;
`;

const BlockText = styled.div`
  position: absolute;
  left: 0;
  width: 100%;
  top: ${(p) => p.$top}px;
  text-align: center;
  white-space: pre;
`;

const PortIn = styled.div`
  position: absolute;
  left: 2px;
  top: ${(p) => p.$top}px;
`;

const PortOut = styled.div`
  position: absolute;
  right: ${(p) => p.$inset || 2}px;
  top: ${(p) => p.$top}px;
`;

const Chart = styled(Node)`
  border: 1px solid #e8242a;
  border-radius: 12px;
  background: linear-gradient(#fff8ec, #fdecca);
  box-shadow: 2px 3px 3px rgba(0, 0, 0, 0.35);
`;

const ChartPort = styled(PortIn)`
  font-size: 8px;
`;

const ChartLabel = styled(BlockLabel)`
  color: #e8242a;
`;

const Selection = styled(Node)`
  background: #6bbcef;
`;

const Chevron = styled.svg`
  position: absolute;
  left: ${(p) => p.$left}px;
  top: 12px;
`;

const WireLayer = styled.svg`
  position: absolute;
  left: 0;
  top: 0;
  pointer-events: none;
`;

const DialogWindow = styled.div`
  position: absolute;
  left: 1334px;
  top: 273px;
  width: 584px;
  height: 564px;
  display: flex;
  flex-direction: column;
  background: #f0f0f0;
  border: 1px solid #666;
  box-shadow: 0 4px 14px rgba(0, 0, 0, 0.35);
  font-size: 15.900px;
  color: #222;
`;

const DialogTitleBar = styled.div`
  height: 37px;
  flex: none;
  padding: 0 12px 0 10px;
  display: flex;
  align-items: center;
  gap: 6px;
  background: #fff;
`;

const DialogTitle = styled.div`
  font-size: 14.500px;
`;

const CloseX = styled.svg`
  margin-left: auto;
`;

const DialogBody = styled.div`
  flex: 1;
  padding: 2px 3px 0;
  display: flex;
  flex-direction: column;
`;

const GroupLegend = styled.legend`
  margin-left: -3px;
  padding: 0 3px;
  line-height: 22px;
`;

const Group = styled.fieldset`
  margin: 0;
  padding: 10px 8px 6px;
  min-width: 0;
  height: 167px;
  flex: none;
  border: 1px solid #d8d8d8;
  border-radius: 1px;
`;

const ParamGroup = styled(Group)`
  margin-top: 10px;
  padding: 12px 10px 0 9px;
  height: 284px;
  ${GroupLegend} {
    margin-left: -4px;
  }
`;

const Para = styled.div`
  line-height: 21px;
  white-space: nowrap;
  margin-bottom: ${(p) => p.$gap || 0}px;
`;

const MinMaxGrid = styled.div`
  display: grid;
  grid-template-columns: 284px 284px;
  grid-template-rows: 22px 27px;
  row-gap: 6px;
`;

const FieldLabel = styled.div`
  line-height: 22px;
`;

const FieldWrap = styled.div`
  margin-left: 3px;
  display: flex;
  gap: 4px;
`;

const TextField = styled.div`
  width: 252px;
  height: 27px;
  padding-left: 3px;
  background: #fff;
  border: 1px solid #7a7a7a;
  line-height: 25px;
`;

const DotsButton = styled.div`
  width: 11px;
  height: 27px;
  flex: none;
  display: flex;
  align-items: center;
  justify-content: center;
  background: #e1e1e1;
  border: 1px solid #d0d0d0;
`;

const TypeRow = styled.div`
  height: 27px;
  margin-top: 13px;
  display: flex;
  align-items: center;
`;

const TypeLabel = styled.div`
  width: 141px;
  flex: none;
`;

const TypeSelect = styled.div`
  width: 298px;
  height: 27px;
  margin-right: 5px;
  flex: none;
  display: flex;
  background: #fff;
  border: 1px solid #7a7a7a;
`;

const TypeValue = styled.div`
  flex: 1;
  padding-left: 3px;
  line-height: 25px;
  white-space: nowrap;
`;

const TypeCaret = styled.div`
  width: 21px;
  flex: none;
  display: flex;
  align-items: center;
  justify-content: center;
  background: #cce4f7;
  border: 1px solid #0078d7;
`;

const ExpandButton = styled.div`
  width: 90px;
  height: 28px;
  margin-left: 10px;
  background: #e1e1e1;
  border: 1px solid #adadad;
  line-height: 26px;
  text-align: center;
`;

const CheckRow = styled.div`
  height: 22px;
  margin-top: ${(p) => p.$mt}px;
  display: flex;
  align-items: center;
  white-space: nowrap;
`;

const CheckBox = styled.span`
  width: 14px;
  height: 14px;
  flex: none;
  margin-right: 7px;
  background: #fff;
  border: 1px solid #333;
`;

const SelectRow = styled.div`
  height: 28px;
  margin-top: ${(p) => p.$mt}px;
  display: flex;
  align-items: center;
  justify-content: space-between;
  white-space: nowrap;
`;

const DisabledSelect = styled.div`
  width: 320px;
  height: 28px;
  padding-right: 6px;
  display: flex;
  align-items: center;
  justify-content: flex-end;
  background: #e0e0e0;
  border: 1px solid #b5b5b5;
`;

const DialogFooter = styled.div`
  height: 29px;
  margin-top: 28px;
  padding: 0 1px 0 6px;
  display: flex;
  justify-content: space-between;
`;

const HelpBadge = styled.div`
  width: 26px;
  height: 26px;
  margin-top: 1px;
  border-radius: 50%;
  background: radial-gradient(circle at 40% 35%, #a8bfe6, #4f76b4);
  border: 2px solid #c8ccd4;
  color: #fff;
  font: 700 17px/22px ${BLOCK_FONT};
  text-align: center;
`;

const FooterButtons = styled.div`
  display: flex;
  gap: 10px;
`;

const PlainButton = styled.div`
  width: 90px;
  background: #e1e1e1;
  border: 1px solid #adadad;
  text-align: center;
  line-height: 27px;
`;

const ApplyButton = styled(PlainButton)`
  background: #cccccc;
  border-color: #bfbfbf;
  color: #838383;
`;

const DropdownList = styled.div`
  position: absolute;
  left: 1489px;
  top: 619px;
  width: 298px;
  height: 382px;
  overflow: hidden;
  background: #fff;
  border: 1px solid #bbb;
  border-top: none;
  box-shadow: 2px 2px 6px rgba(0, 0, 0, 0.35);
  font-size: 15.900px;
  color: #222;
`;

const DropdownItem = styled.div`
  height: 22px;
  padding-left: 3px;
  line-height: 23px;
  white-space: nowrap;
  background: ${(p) => (p.$selected ? "#0078d7" : "#fff")};
  color: ${(p) => (p.$selected ? "#fff" : "#222")};
  ${(p) => p.$selected && "outline: 1px dotted #e8a33d; outline-offset: -1px;"}
`;

const RedBox = styled.div`
  position: absolute;
  left: ${(p) => p.$x}px;
  top: ${(p) => p.$y}px;
  width: ${(p) => p.$w}px;
  height: ${(p) => p.$h}px;
  border: 3.500px solid #e60012;
  border-radius: 3px;
`;

const StepBadge = styled.div`
  position: absolute;
  left: ${(p) => p.$x}px;
  top: ${(p) => p.$y}px;
  width: 43px;
  height: 43px;
  border-radius: 50%;
  background: #e60012;
  box-shadow: 1px 2px 3px rgba(0, 0, 0, 0.4);
  color: #fff;
  font: 700 30px/43px ${BLOCK_FONT};
  text-align: center;
`;

const BusyCursor = styled.svg`
  position: absolute;
  left: 1731px;
  top: 801px;
`;
